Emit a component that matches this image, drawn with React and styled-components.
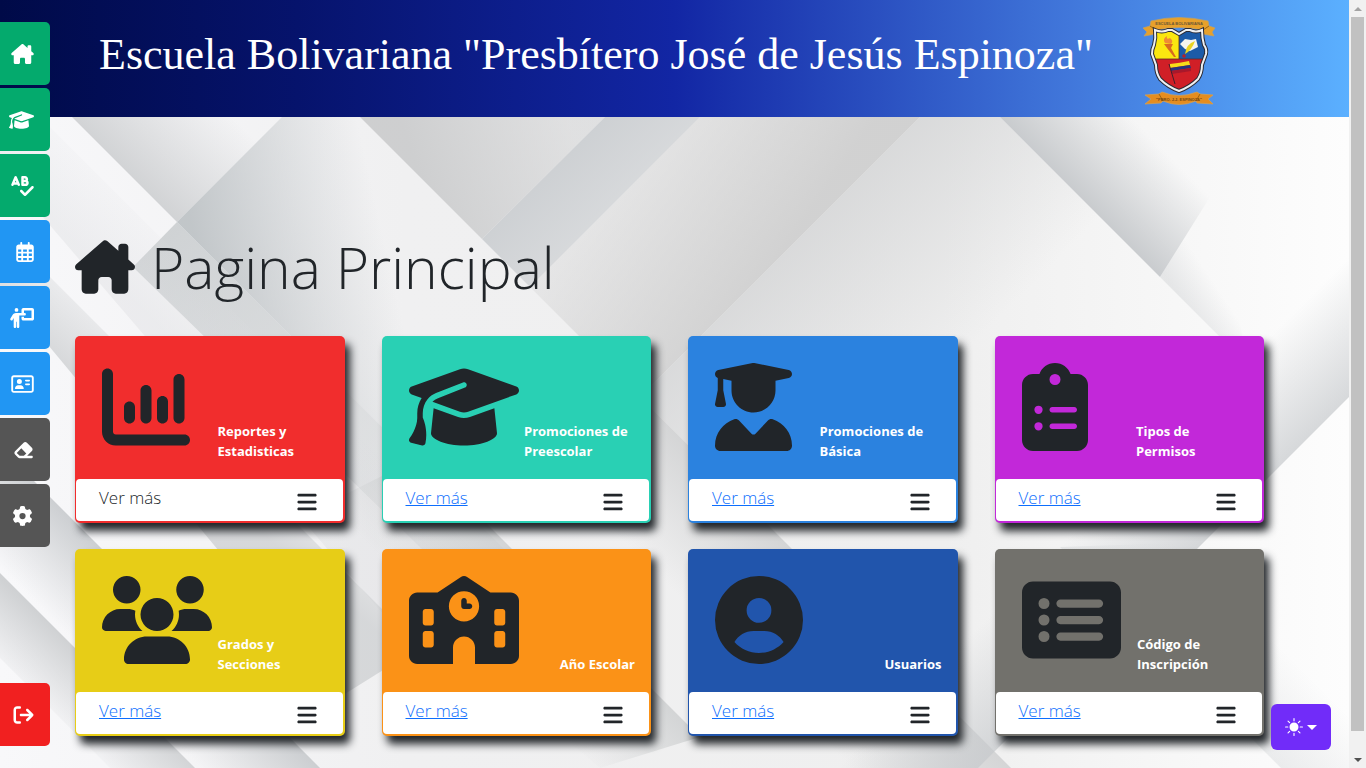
import React from "react";
import styled, { createGlobalStyle, css } from "styled-components";
import {
  FaHouseChimney,
  FaGraduationCap,
  FaSpellCheck,
  FaRegCalendarDays,
  FaPersonChalkboard,
  FaRegAddressCard,
  FaEraser,
  FaGear,
  FaArrowRightFromBracket,
  FaChartColumn,
  FaUserGraduate,
  FaClipboardList,
  FaUsers,
  FaSchool,
  FaCircleUser,
  FaRectangleList,
  FaBars,
} from "react-icons/fa6";
import { BsSunFill } from "react-icons/bs";

const GlobalStyle = createGlobalStyle`
  *, *::before, *::after { box-sizing: border-box; }
  body {
    margin: 0;
    color: #212529;
    background: #ececed;
    font-family: "Open Sans", "Noto Sans", sans-serif;
    font-size: 16px;
    line-height: 24px;
  }
`;

const Shell = styled.div`
  display: flex;
  height: 100vh;
  overflow: hidden;
`;

const Page = styled.div`
  position: relative;
  flex: 1;
  min-width: 0;
  display: flex;
  flex-direction: column;
  overflow: hidden;
`;

const Header = styled.header`
  flex: none;
  display: flex;
  align-items: center;
  justify-content: space-between;
  height: 117px;
  padding: 0 133px 0 99px;
  background: linear-gradient(90deg, #000a48 0%, #06136c 22%, #1226a4 50%, #4279dc 80%, #5bb0ff 100%);
`;

const SchoolName = styled.h1`
  margin: 0 0 8px;
  color: #fff;
  font: 400 44px/54px "Liberation Serif", serif;
  white-space: nowrap;
`;

const Crest = styled.svg`
  flex: none;
  width: 74px;
  height: 92px;
  margin-top: 8px;
`;

const Main = styled.main`
  position: relative;
  flex: 1;
  padding: 114px 85px 0 75px;
`;

const Backdrop = styled.svg`
  position: absolute;
  inset: 0;
  width: 100%;
  height: 100%;
  z-index: -1;
`;

const Heading = styled.h2`
  display: flex;
  align-items: center;
  gap: 16px;
  height: 72px;
  margin: 0 0 33px;
  font-size: 57px;
  line-height: 72px;
  font-weight: 300;
  white-space: nowrap;

  svg {
    width: 60px;
    height: 54px;
  }
`;

const CardGrid = styled.div`
  display: grid;
  grid-template-columns: repeat(4, 1fr);
  gap: 26px 37px;
`;

const Card = styled.article`
  padding: 0 2px 2px 1px;
  border-radius: 5px;
  background: ${(p) => p.$color};
  box-shadow: 5px 8px 8px #212529;
`;

const CardTop = styled.div`
  display: flex;
  align-items: flex-start;
  justify-content: space-between;
  height: 143px;
  padding: 27px 14px 18px 26px;

  svg {
    flex: none;
    width: ${(p) => p.$iconWidth}px;
    height: 88px;
  }
`;

const CardLabel = styled.strong`
  flex: none;
  align-self: flex-end;
  width: ${(p) => (p.$width ? `${p.$width}px` : "auto")};
  color: #fff;
  font-size: 13px;
  line-height: 20px;
  font-weight: 700;
  white-space: pre-line;
`;

const CardFooter = styled.div`
  display: flex;
  justify-content: space-between;
  height: 42px;
  padding: 7px 26px 0 23px;
  border-radius: 4px;
  background: #fff;

  svg {
    width: 20px;
    height: 22px;
    margin-top: 5px;
  }
`;

const moreText = css`
  font-size: 17px;
  line-height: 24px;
  font-weight: 300;
`;

const MoreText = styled.span`
  ${moreText}
`;

const MoreLink = styled.a`
  ${moreText}
  color: #0d6efd;
`;

const SideNav = styled.nav`
  position: absolute;
  inset: 22px auto 22px 0;
  width: 50px;
  display: flex;
  flex-direction: column;
  gap: 3px;
`;

const SideLink = styled.a`
  display: flex;
  align-items: center;
  justify-content: flex-end;
  height: 63px;
  padding-right: 16px;
  border-radius: 0 5px 5px 0;
  background: ${(p) => p.$color};
  color: #fff;

  &:last-child {
    margin-top: auto;
  }

  svg {
    flex: none;
    width: ${(p) => p.$iconWidth}px;
    height: 20px;
  }
`;

const ThemeButton = styled.button`
  position: absolute;
  right: 18px;
  bottom: 18px;
  display: flex;
  align-items: center;
  justify-content: center;
  gap: 4px;
  width: 60px;
  height: 46px;
  padding: 0;
  border: 0;
  border-radius: 6px;
  background: #712cf9;
  color: #fff;
  font-size: 18px;

  &::after {
    content: "";
    border: 5px solid transparent;
    border-top-color: #fff;
    border-bottom: 0;
  }
`;

const ScrollTrack = styled.div`
  flex: none;
  display: flex;
  flex-direction: column;
  width: 17px;
  padding: 0 2px;
  background: #f1f1f1;
`;

const ScrollArrow = styled.span`
  flex: none;
  display: flex;
  align-items: center;
  justify-content: center;
  height: 17px;

  &::after {
    content: "";
    border: 4px solid transparent;
    ${(p) =>
      p.$down
        ? "border-top-color: #505050; border-bottom: 0;"
        : "border-bottom-color: #a3a3a3; border-top: 0;"}
  }
`;

const ScrollThumb = styled.div`
  flex: 1;
  margin-bottom: 20px;
  background: #c1c1c1;
`;

const NAV = [
  { label: "Inicio", color: "#04aa6d", Icon: FaHouseChimney, iconWidth: 23 },
  { label: "Promociones", color: "#04aa6d", Icon: FaGraduationCap, iconWidth: 25 },
  { label: "Calificaciones", color: "#04aa6d", Icon: FaSpellCheck, iconWidth: 23 },
  { label: "Calendario", color: "#2196f3", Icon: FaRegCalendarDays, iconWidth: 18 },
  { label: "Docentes", color: "#2196f3", Icon: FaPersonChalkboard, iconWidth: 25 },
  { label: "Representantes", color: "#2196f3", Icon: FaRegAddressCard, iconWidth: 23 },
  { label: "Borrar", color: "#555555", Icon: FaEraser, iconWidth: 21 },
  { label: "Ajustes", color: "#555555", Icon: FaGear, iconWidth: 23 },
  { label: "Salir", color: "#f12020", Icon: FaArrowRightFromBracket, iconWidth: 21 },
];

const CARDS = [
  { title: "Reportes y\nEstadisticas", color: "#f12d2d", Icon: FaChartColumn, iconWidth: 88, width: 111, plain: true },
  { title: "Promociones de\nPreescolar", color: "#29d0b4", Icon: FaGraduationCap, iconWidth: 110, width: 111 },
  { title: "Promociones de\nBásica", color: "#2b82df", Icon: FaUserGraduate, iconWidth: 77, width: 122 },
  { title: "Tipos de\nPermisos", color: "#c228d9", Icon: FaClipboardList, iconWidth: 66, width: 112 },
  { title: "Grados y\nSecciones", color: "#e7cd17", Icon: FaUsers, iconWidth: 110, width: 111 },
  { title: "Año Escolar", color: "#fb9217", Icon: FaSchool, iconWidth: 110 },
  { title: "Usuarios", color: "#2155ac", Icon: FaCircleUser, iconWidth: 88 },
  { title: "Código de\nInscripción", color: "#72716c", Icon: FaRectangleList, iconWidth: 99, width: 111 },
];

/* Each facet is a polygon shaded from its sharp edge (from) out to nothing (to). */
const FACETS = [
  { pts: "72,0 282,0 177,105", from: [125, 52], to: [205, -28], color: "#c9cbcd", o: 0.8 },
  { pts: "282,0 360,0 800,440 512,440 177,105", from: [190, 100], to: [370, 60], color: "#bcc1c4", o: 0.9 },
  { pts: "177,105 512,440 430,440 133,150", from: [155, 127], to: [420, 400], color: "#c3c7c9", o: 0.75, end: 0.3 },
  { pts: "360,0 605,0 482,122", from: [420, 60], to: [570, 10], color: "#c8c9ca", o: 0.85, end: 0.4 },
  { pts: "605,0 700,0 530,170 482,122", from: [543, 62], to: [590, 110], color: "#cccfd2", o: 0.95, end: 0.7 },
  { pts: "530,170 700,0 920,0 640,280", from: [780, 140], to: [620, 30], color: "#cccccc", o: 0.85, end: 0.25 },
  { pts: "640,280 920,0 1000,0 1500,500 1000,640", from: [780, 140], to: [920, 280], color: "#d2d3d4", o: 0.75 },
  { pts: "1000,0 1130,0 1210,80 1160,160", from: [1080, 80], to: [1145, 15], color: "#c4c7ca", o: 0.9 },
  { pts: "1160,160 1210,80 1250,250", from: [1160, 150], to: [1190, 130], color: "#c4c7ca", o: 0.35 },
  { pts: "0,50 0,-40 500,460 420,540", from: [200, 250], to: [260, 190], color: "#dcdde0", o: 0.4 },
  { pts: "0,170 0,110 420,530 340,580", from: [150, 320], to: [210, 250], color: "#cfd1d3", o: 0.8 },
  { pts: "0,330 130,460 320,651 190,651 0,460", from: [100, 430], to: [40, 490], color: "#c2c5c8", o: 0.8 },
  { pts: "0,456 195,651 110,651 0,541", from: [60, 516], to: [10, 570], color: "#cbcdcf", o: 0.9 },
  { pts: "420,340 700,620 600,651 300,400", from: [500, 420], to: [430, 490], color: "#cccecf", o: 0.8 },
  { pts: "640,280 1011,651 800,651 480,340", from: [760, 400], to: [680, 480], color: "#cbcccd", o: 0.75 },
  { pts: "1349,280 978,651 800,651 1349,60", from: [1200, 429], to: [1130, 359], color: "#c6c9cc", o: 0.7 },
  { pts: "1060,430 1281,651 1349,651 1349,420", from: [1170, 540], to: [1230, 480], color: "#d2d5d7", o: 0.4 },
];

function FacetBackdrop() {
  return (
    <Backdrop viewBox="0 0 1349 651" preserveAspectRatio="none" aria-hidden="true">
      <defs>
        <linearGradient id="base" x1="0" y1="0" x2="1" y2="0">
          <stop offset="0" stopColor="#f8f8fa" />
          <stop offset="0.3" stopColor="#f0f0f1" />
          <stop offset="0.7" stopColor="#efefef" />
          <stop offset="1" stopColor="#fdfdfd" />
        </linearGradient>
        {FACETS.map((f, i) => (
          <linearGradient
            key={i}
            id={`facet${i}`}
            gradientUnits="userSpaceOnUse"
            x1={f.from[0]}
            y1={f.from[1]}
            x2={f.to[0]}
            y2={f.to[1]}
          >
            <stop offset="0" stopColor={f.color} stopOpacity={f.o} />
            <stop offset="1" stopColor={f.color} stopOpacity={f.end || 0} />
          </linearGradient>
        ))}
      </defs>
      <rect width="1349" height="651" fill="url(#base)" />
      {FACETS.map((f, i) => (
        <polygon key={i} points={f.pts} fill={`url(#facet${i})`} />
      ))}
    </Backdrop>
  );
}

function SchoolCrest() {
  return (
    <Crest viewBox="0 0 74 92" role="img" aria-label="Escudo de la escuela">
      <defs>
        <clipPath id="shield">
          <path d="M13 13 Q20 16 26 13 L30 13 L37 17 L44 13 L48 13 Q54 16 60 13 Q60 21 62 28 Q65 32 64 37 L60 48 Q60 56 56 62 Q48 70 37 74 Q26 70 18 62 Q14 56 14 48 L10 37 Q10 32 12 28 Q14 21 13 13Z" />
        </clipPath>
      </defs>
      <path d="M1 11 L8 9 L9 4 Q37 -3 66 4 L67 9 L73 11 L70 15 L72 19 L61 17 L61 13 Q37 8 14 13 L14 17 L2 19 L5 15Z" fill="#e7a02b" stroke="#c9a25a" strokeWidth="0.7" />
      <path d="M8 9 L14 13 M67 9 L61 13" stroke="#9b6410" strokeWidth="1" />
      <g clipPath="url(#shield)">
        <rect x="8" y="8" width="30" height="34" fill="#fbe710" />
        <rect x="37" y="8" width="30" height="34" fill="#1c5ba8" />
        <rect x="8" y="42" width="60" height="36" fill="#d01f27" />
        <path d="M37 12 V42 M9 42 H66" stroke="#5b2b28" strokeWidth="0.8" />
      </g>
      <path d="M13 13 Q20 16 26 13 L30 13 L37 17 L44 13 L48 13 Q54 16 60 13 Q60 21 62 28 Q65 32 64 37 L60 48 Q60 56 56 62 Q48 70 37 74 Q26 70 18 62 Q14 56 14 48 L10 37 Q10 32 12 28 Q14 21 13 13Z" fill="none" stroke="#2b2b35" strokeWidth="4" />
      <path d="M13 13 Q20 16 26 13 L30 13 L37 17 L44 13 L48 13 Q54 16 60 13 Q60 21 62 28 Q65 32 64 37 L60 48 Q60 56 56 62 Q48 70 37 74 Q26 70 18 62 Q14 56 14 48 L10 37 Q10 32 12 28 Q14 21 13 13Z" fill="none" stroke="#eef0f2" strokeWidth="2" />
      <path d="M22 27 L31 27 L29 31 L34 40 L32 40 L25 31Z" fill="#d86b20" />
      <path d="M23 26 Q20 22 25 19 Q24 23 28 21 Q32 24 29 27Z" fill="#ef8b35" />
      <path d="M38 27 L43 22 L49 23 L54 22 L56 30 L48 34 L43 32Z" fill="#f5f5ee" />
      <path d="M53 24 Q44 27 43 37 Q50 33 53 24Z" fill="#e9d422" />
      <circle cx="42" cy="39" r="1.8" fill="#b52129" />
      <path d="M28 47 Q38 46 47 44 L48 48 L28 51Z" fill="#f7dc1a" />
      <path d="M28 51 L48 48 L49 51 L29 54Z" fill="#27357c" />
      <path d="M29 54 L49 51 L49 54 L30 57Z" fill="#a8182b" />
      <path d="M27 47 L33 67" stroke="#40202a" strokeWidth="1" />
      <path d="M3 78 L17 77 L20 75 Q37 82 55 75 L58 77 L71 78 L66 82 L71 87 L55 86 L54 84 Q37 91 21 84 L19 86 L3 87 L9 82Z" fill="#e58d20" stroke="#d9a252" strokeWidth="0.7" />
      <path d="M17 77 L21 84 M58 77 L54 84" stroke="#9b6410" strokeWidth="1" />
      <text x="37" y="8" fontFamily="Liberation Sans, sans-serif" fontWeight="700" fontSize="4" fill="#6c5836" textAnchor="middle">
        ESCUELA BOLIVARIANA
      </text>
      <text x="37" y="84" fontFamily="Liberation Sans, sans-serif" fontWeight="700" fontSize="4" fill="#774711" textAnchor="middle">
        "PBRO. J.J. ESPINOZA"
      </text>
    </Crest>
  );
}

export default function App() {
  return (
    <Shell>
      <GlobalStyle />
      <Page>
        <Header>
          <SchoolName>Escuela Bolivariana "Presbítero José de Jesús Espinoza"</SchoolName>
          <SchoolCrest />
        </Header>
        <Main>
          <FacetBackdrop />
          <Heading>
            <FaHouseChimney />
            Pagina Principal
          </Heading>
          <CardGrid>
            {CARDS.map(({ title, color, Icon, iconWidth, width, plain }) => (
              <Card key={title} $color={color}>
                <CardTop $iconWidth={iconWidth}>
                  <Icon />
                  <CardLabel $width={width}>{title}</CardLabel>
                </CardTop>
                <CardFooter>
                  {plain ? <MoreText>Ver más</MoreText> : <MoreLink href="#">Ver más</MoreLink>}
                  <FaBars />
                </CardFooter>
              </Card>
            ))}
          </CardGrid>
        </Main>
        <SideNav aria-label="Menú principal">
          {NAV.map(({ label, color, Icon, iconWidth }) => (
            <SideLink key={label} href="#" $color={color} $iconWidth={iconWidth} aria-label={label}>
              <Icon />
            </SideLink>
          ))}
        </SideNav>
        <ThemeButton type="button" aria-label="Cambiar tema">
          <BsSunFill />
        </ThemeButton>
      </Page>
      <ScrollTrack aria-hidden="true">
        <ScrollArrow />
        <ScrollThumb />
        <ScrollArrow $down />
      </ScrollTrack>
    </Shell>
  );
}
